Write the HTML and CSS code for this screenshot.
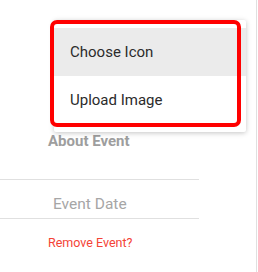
FILE: index.html
```html
<html>
  <head>
    <title>Event</title>
    <link rel="stylesheet" href="styles.css">
  </head>
  <body>
    <div id="panel">
      <div class="section">
        <div class="heading">About Event</div>
      </div>
      <div class="field">
        <span class="placeholder">Event Date</span>
      </div>
      <div class="section">
        <a class="remove">Remove Event?</a>
      </div>
      <div class="menu">
        <div class="item active">Choose Icon</div>
        <div class="item">Upload Image</div>
      </div>
      <div class="highlight"></div>
    </div>
  </body>
</html>
```

FILE: styles.css
```css
body{
  margin:0;
  background:white;
  font-family:Roboto,"Noto Sans",sans-serif;
}

#panel{
  position:relative;
  width:257px;
  height:272px;
  box-sizing:border-box;
  border-right:1px solid #e0e0e0;
  padding-top:131px;
}

.section{
  padding-left:48px;
}

.heading{
  font-size:15px;
  font-weight:bold;
  line-height:20px;
  color:#9e9e9e;
}

.field{
  display:flex;
  align-items:flex-start;
  box-sizing:border-box;
  width:199px;
  height:40px;
  margin-top:28px;
  border-top:1px solid #e0e0e0;
  border-bottom:1px solid #e0e0e0;
  padding:14px 0 0 53px;
}

.placeholder{
  font-size:15.5px;
  line-height:20px;
  color:#a6a6a6;
}

.remove{
  display:block;
  margin-top:16px;
  font-size:12.5px;
  color:#f44336;
}

/* popup menu over the form */
.menu{
  position:absolute;
  left:54px;
  top:20px;
  width:192px;
  padding:8px 0;
  background:white;
  border-radius:2px;
  box-shadow:0 1px 6px rgba(0,0,0,0.12),0 1px 4px rgba(0,0,0,0.12);
}

.item{
  height:48px;
  line-height:48px;
  padding-left:16px;
  font-size:15px;
  color:#2b2b2b;
}

.active{
  background:#ebebeb;
}

.highlight{
  position:absolute;
  left:50px;
  top:20px;
  width:191px;
  height:107px;
  box-sizing:border-box;
  border:4px solid #ff0000;
  border-radius:7px;
}
```
